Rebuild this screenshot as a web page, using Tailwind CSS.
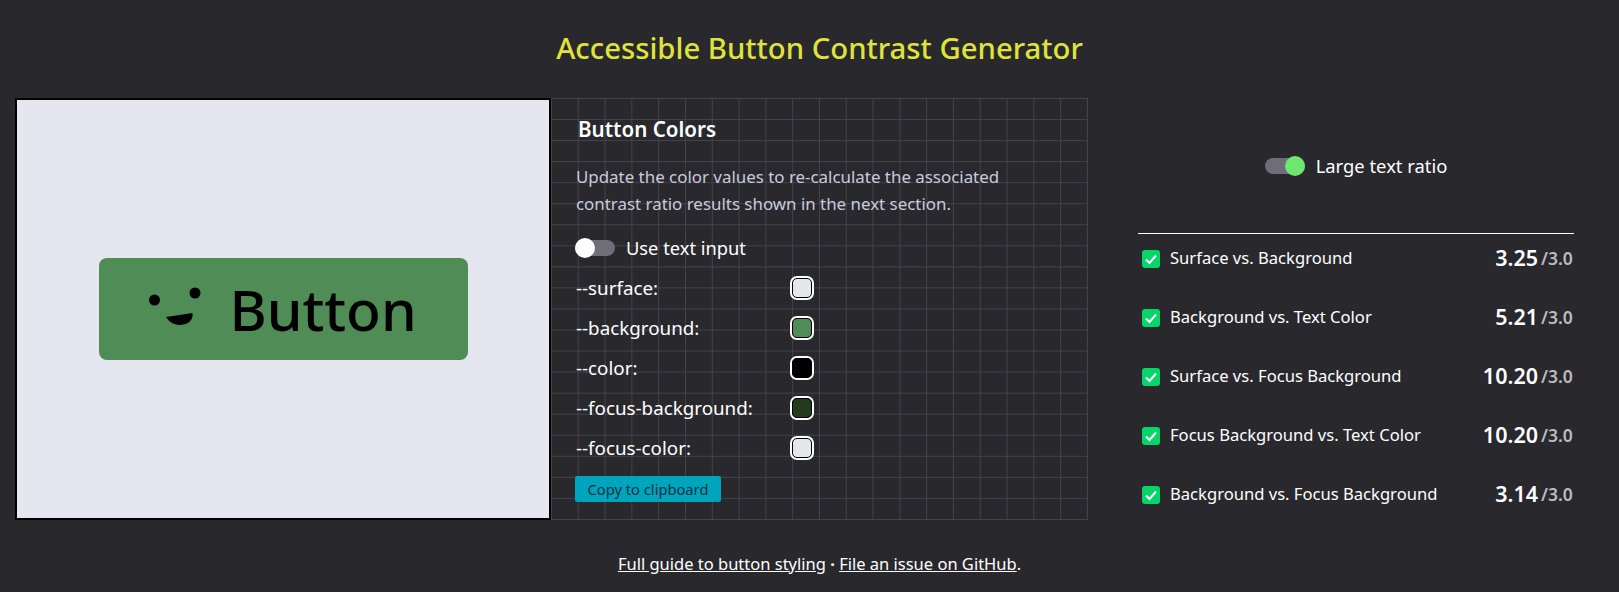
<!DOCTYPE html>
<html lang="en">
<head>
    <meta charset="UTF-8">
    <title>Accessible Button Contrast Generator</title>
    <script src="https://cdn.jsdelivr.net/npm/@tailwindcss/browser@4"></script>
</head>
<body class="bg-[#28282d] text-white overflow-hidden font-['Noto_Sans',sans-serif]">
    <main class="w-[1639px] h-[592px]">
        <h1 class="h-[98px] pt-[28px] text-center text-[29.3px] leading-[40px] font-medium text-[#dfe33a]">Accessible Button Contrast Generator</h1>

        <div class="grid grid-cols-[536px_537px_536px] grid-rows-[422px] pl-[15px]">
            <!-- Preview -->
            <section class="bg-[#e5e6ef] border-2 border-black flex items-center justify-center">
                <button class="w-[369px] h-[102px] bg-[#508c55] text-black rounded-lg flex items-center justify-center gap-[28px]">
                    <svg class="w-[52px] h-[40px] mb-[4px]" viewBox="0 0 52 40" fill="currentColor">
                        <circle cx="5.5" cy="13" r="5.5"/>
                        <circle cx="46" cy="6" r="5.5"/>
                        <path d="M17 30 L43.5 26 Q44.5 37 31 38 Q22 38 17 30 Z"/>
                    </svg>
                    <span class="text-[57px] leading-none font-medium">Button</span>
                </button>
            </section>

            <!-- Colors -->
            <section class="border-r border-b border-[#434349] pl-[25px] pr-6 bg-[linear-gradient(to_right,#434349_1px,transparent_1px),linear-gradient(to_bottom,#434349_1px,transparent_1px)] bg-[size:26.8px_21.05px]">
                <h2 class="mt-[17px] ml-[2px] text-[20.6px] leading-[28px] font-semibold">Button Colors</h2>
                <p class="mt-[20px] w-[440px] text-[16.9px] leading-[27px] text-[#c9cbdc]">Update the color values to re-calculate the associated contrast ratio results shown in the next section.</p>
                <div class="mt-[19px] -ml-px flex items-center gap-[11px] h-[24px]">
                    <span class="relative w-[40px] h-[16px] rounded-full bg-[#6f6d78]">
                        <span class="absolute left-0 top-[-2px] w-[20px] h-[20px] rounded-full bg-white"></span>
                    </span>
                    <span class="text-[18.3px] leading-[24px]">Use text input</span>
                </div>
                <ul class="mt-[8px]">
                    <li class="h-[40px] flex items-center">
                        <span class="w-[214px] text-[18.8px]">--surface:</span>
                        <span class="w-[24px] h-[24px] rounded-[7px] border-2 border-white bg-[#e5e6ef] outline-1 -outline-offset-3 outline-black"></span>
                    </li>
                    <li class="h-[40px] flex items-center">
                        <span class="w-[214px] text-[18.8px]">--background:</span>
                        <span class="w-[24px] h-[24px] rounded-[7px] border-2 border-white bg-[#508c55] outline-1 -outline-offset-3 outline-black"></span>
                    </li>
                    <li class="h-[40px] flex items-center">
                        <span class="w-[214px] text-[18.8px]">--color:</span>
                        <span class="w-[24px] h-[24px] rounded-[7px] border-2 border-white bg-black outline-1 -outline-offset-3 outline-black"></span>
                    </li>
                    <li class="h-[40px] flex items-center">
                        <span class="w-[214px] text-[18.8px]">--focus-background:</span>
                        <span class="w-[24px] h-[24px] rounded-[7px] border-2 border-white bg-[#243a1c] outline-1 -outline-offset-3 outline-black"></span>
                    </li>
                    <li class="h-[40px] flex items-center">
                        <span class="w-[214px] text-[18.8px]">--focus-color:</span>
                        <span class="w-[24px] h-[24px] rounded-[7px] border-2 border-white bg-[#e5e6ef] outline-1 -outline-offset-3 outline-black"></span>
                    </li>
                </ul>
                <button class="mt-[8px] -ml-px w-[146px] h-[26px] rounded-[2px] bg-[#00a4bd] text-[#04343d] text-[14.7px] leading-[26px]">Copy to clipboard</button>
            </section>

            <!-- Results -->
            <section class="pl-[50px] pr-[50px]">
                <div class="mt-[56px] flex items-center justify-center gap-[11px] h-[24px]">
                    <span class="relative w-[40px] h-[16px] rounded-full bg-[#6f6d78]">
                        <span class="absolute right-0 top-[-2px] w-[20px] h-[20px] rounded-full bg-[#6de86e]"></span>
                    </span>
                    <span class="text-[18.4px] leading-[24px]">Large text ratio</span>
                </div>
                <ul class="mt-[55px] border-t border-white">
                    <li class="h-[59px] mt-[-5px] flex items-center text-[16.6px]">
                        <svg class="ml-[4px] mr-[10px] w-[18px] h-[18px]" viewBox="0 0 18 18"><rect width="18" height="18" rx="3" fill="#06d66a"/><path d="M4 9.5 L7.5 13 L14 5.5" fill="none" stroke="#fff" stroke-width="2"/></svg>
                        <span>Surface vs. Background</span>
                        <span class="ml-auto text-[21.5px] font-semibold">3.25</span>
                        <span class="ml-[3px] w-[33px] text-[17.5px] font-semibold text-[#bbbbc0]">/3.0</span>
                    </li>
                    <li class="h-[59px] flex items-center text-[16.6px]">
                        <svg class="ml-[4px] mr-[10px] w-[18px] h-[18px]" viewBox="0 0 18 18"><rect width="18" height="18" rx="3" fill="#06d66a"/><path d="M4 9.5 L7.5 13 L14 5.5" fill="none" stroke="#fff" stroke-width="2"/></svg>
                        <span>Background vs. Text Color</span>
                        <span class="ml-auto text-[21.5px] font-semibold">5.21</span>
                        <span class="ml-[3px] w-[33px] text-[17.5px] font-semibold text-[#bbbbc0]">/3.0</span>
                    </li>
                    <li class="h-[59px] flex items-center text-[16.6px]">
                        <svg class="ml-[4px] mr-[10px] w-[18px] h-[18px]" viewBox="0 0 18 18"><rect width="18" height="18" rx="3" fill="#06d66a"/><path d="M4 9.5 L7.5 13 L14 5.5" fill="none" stroke="#fff" stroke-width="2"/></svg>
                        <span>Surface vs. Focus Background</span>
                        <span class="ml-auto text-[21.5px] font-semibold">10.20</span>
                        <span class="ml-[3px] w-[33px] text-[17.5px] font-semibold text-[#bbbbc0]">/3.0</span>
                    </li>
                    <li class="h-[59px] flex items-center text-[16.6px]">
                        <svg class="ml-[4px] mr-[10px] w-[18px] h-[18px]" viewBox="0 0 18 18"><rect width="18" height="18" rx="3" fill="#06d66a"/><path d="M4 9.5 L7.5 13 L14 5.5" fill="none" stroke="#fff" stroke-width="2"/></svg>
                        <span>Focus Background vs. Text Color</span>
                        <span class="ml-auto text-[21.5px] font-semibold">10.20</span>
                        <span class="ml-[3px] w-[33px] text-[17.5px] font-semibold text-[#bbbbc0]">/3.0</span>
                    </li>
                    <li class="h-[59px] flex items-center text-[16.6px]">
                        <svg class="ml-[4px] mr-[10px] w-[18px] h-[18px]" viewBox="0 0 18 18"><rect width="18" height="18" rx="3" fill="#06d66a"/><path d="M4 9.5 L7.5 13 L14 5.5" fill="none" stroke="#fff" stroke-width="2"/></svg>
                        <span>Background vs. Focus Background</span>
                        <span class="ml-auto text-[21.5px] font-semibold">3.14</span>
                        <span class="ml-[3px] w-[33px] text-[17.5px] font-semibold text-[#bbbbc0]">/3.0</span>
                    </li>
                </ul>
            </section>
        </div>

        <p class="mt-[32px] text-center text-[16.5px] leading-[24px]"><a href="#" class="underline">Full guide to button styling</a> <b>·</b> <a href="#" class="underline">File an issue on GitHub</a>.</p>
    </main>
</body>
</html>
